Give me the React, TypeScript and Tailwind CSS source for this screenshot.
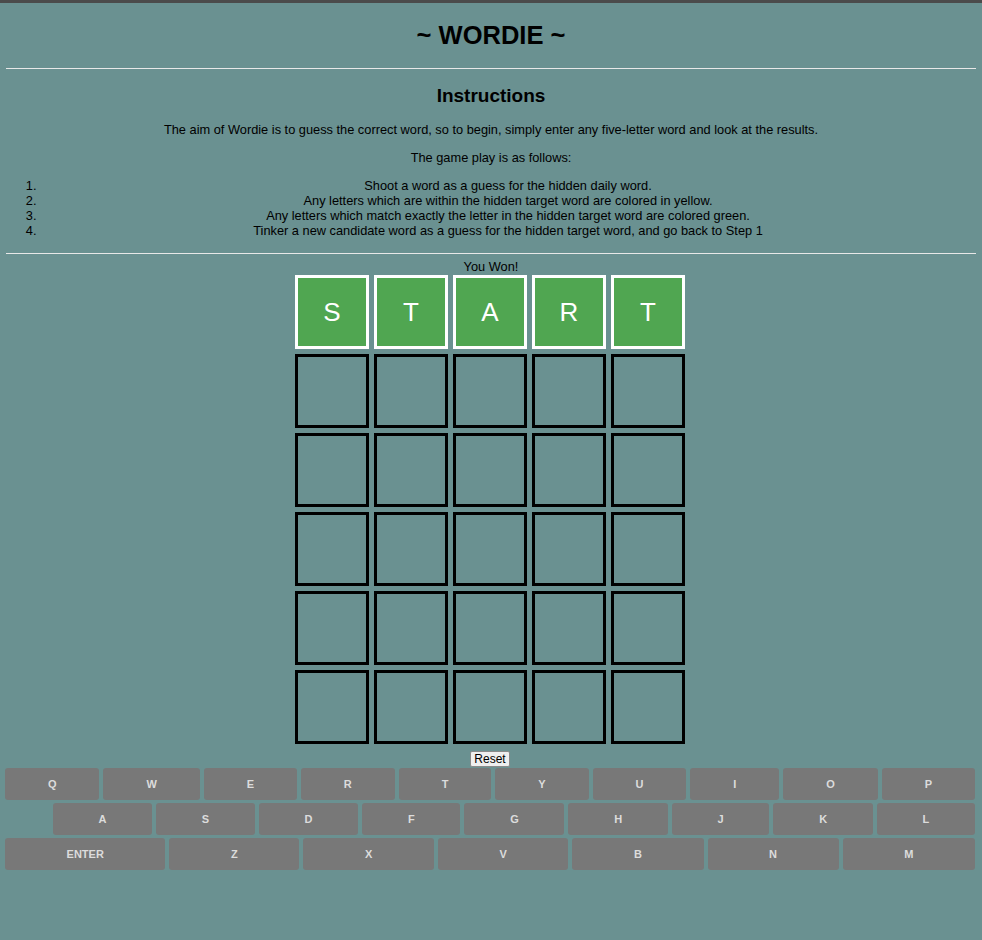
const rows = [
  ["Q", "W", "E", "R", "T", "Y", "U", "I", "O", "P"],
  ["A", "S", "D", "F", "G", "H", "J", "K", "L"],
  ["ENTER", "Z", "X", "C", "V", "B", "N", "M"],
];

const steps = [
  "Shoot a word as a guess for the hidden daily word.",
  "Any letters which are within the hidden target word are colored in yellow.",
  "Any letters which match exactly the letter in the hidden target word are colored green.",
  "Tinker a new candidate word as a guess for the hidden target word, and go back to Step 1",
];

function Tile({ letter }: { letter?: string }) {
  if (letter) {
    return (
      <div className="w-[74px] h-[74px] border-[3px] border-white bg-[#50a651] flex items-center justify-center text-white text-[26px]">
        {letter}
      </div>
    );
  }
  return <div className="w-[74px] h-[74px] border-[3px] border-black" />;
}

export default function App() {
  // the reference keyboard skips C on the bottom row
  const bottom = rows[2].filter((k) => k !== "C");

  return (
    <div className="min-h-[940px] bg-[#6a9191] text-black font-['Liberation_Sans',Arial,sans-serif]">
      <div className="h-[3px] bg-[#4b4b4b]" />
      <div className="px-[6px]">
        <h1 className="mt-[17px] text-center text-[25.5px] leading-[30px] font-bold">~ WORDIE ~</h1>
        <hr className="mt-[18px] border-t border-[#e8e8e8]" />

        <h2 className="mt-[15px] text-center text-[19px] leading-[24px] font-bold">Instructions</h2>
        <p className="mt-[14px] text-center text-[12.8px] leading-[15px]">
          The aim of Wordie is to guess the correct word, so to begin, simply enter any five-letter word and look at the results.
        </p>
        <p className="mt-[13px] text-center text-[12.8px] leading-[15px]">The game play is as follows:</p>
        <ol className="mt-[13px] pl-[34px] list-decimal text-center text-[12.8px] leading-[15px]">
          {steps.map((s) => (
            <li key={s}>{s}</li>
          ))}
        </ol>
        <hr className="mt-[15px] border-t border-[#e8e8e8]" />

        <div className="mt-[5px] text-center text-[12.8px] leading-[15px]">You Won!</div>
        <div className="mt-[1px] flex flex-col items-center gap-[5px] pr-[2px]">
          <div className="flex gap-[5px]">
            {"START".split("").map((l, i) => (
              <Tile key={i} letter={l} />
            ))}
          </div>
          {[0, 1, 2, 3, 4].map((r) => (
            <div key={r} className="flex gap-[5px]">
              {[0, 1, 2, 3, 4].map((c) => (
                <Tile key={c} />
              ))}
            </div>
          ))}
        </div>

        <div className="mt-[7px] flex justify-center pr-[2px]">
          <button className="h-[16px] px-[3px] bg-[#efefef] border border-[#8a8a8a] rounded-[2px] text-[12px] leading-[14px] text-black">
            Reset
          </button>
        </div>
      </div>

      <div className="mt-[1px] pl-[5px] pr-[7px] flex flex-col gap-[3px]">
        <div className="flex gap-[4px]">
          {rows[0].map((k) => (
            <Key key={k} label={k} />
          ))}
        </div>
        <div className="flex gap-[4px]">
          <div className="grow-[0.5]" />
          {rows[1].map((k) => (
            <Key key={k} label={k} />
          ))}
        </div>
        <div className="flex gap-[4px]">
          {bottom.map((k) => (
            <Key key={k} label={k} />
          ))}
        </div>
      </div>
    </div>
  );
}

function Key({ label }: { label: string }) {
  return (
    <div className="flex-auto h-[32px] px-[2px] rounded-[3px] bg-[#787878] text-[#dcdcdc] text-[11px] font-bold flex items-center justify-center">
      {label}
    </div>
  );
}
